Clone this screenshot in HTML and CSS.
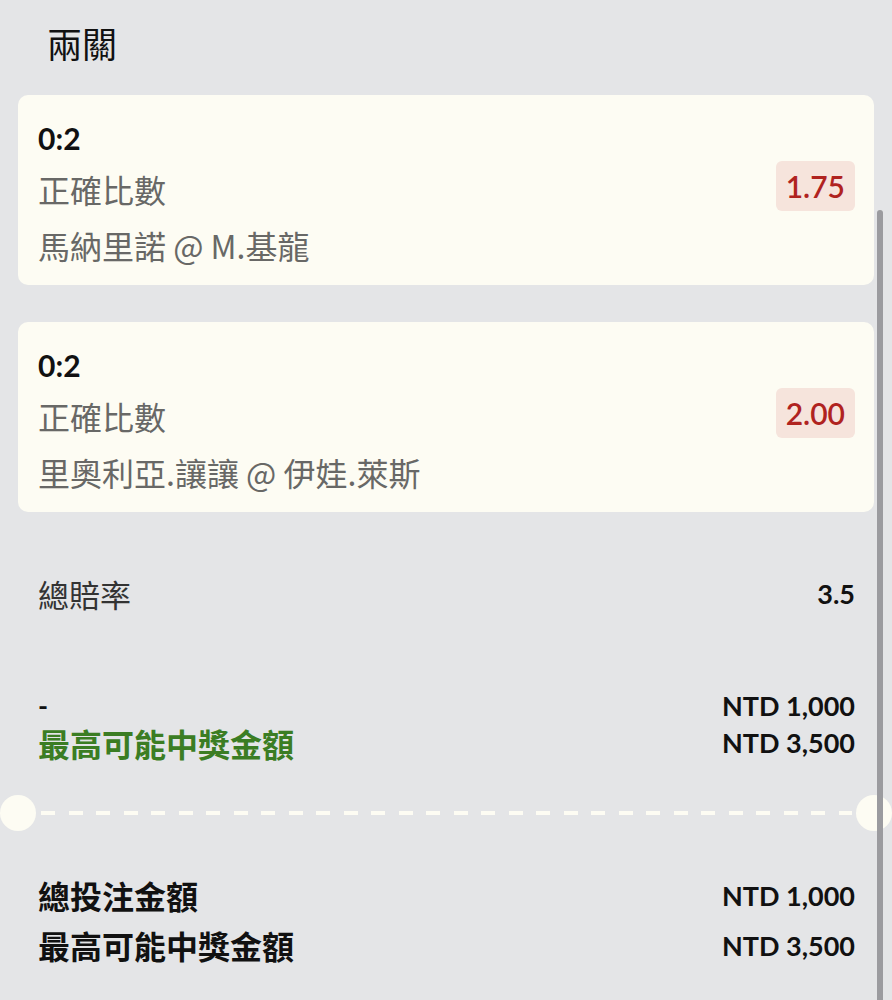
FILE: index.html
```html
<!DOCTYPE html>
<html lang="zh-Hant">
<head>
<meta charset="utf-8">
<link rel="stylesheet" href="styles.css">
</head>
<body>
<div class="page">
  <h1 class="title">兩關</h1>
  <div class="card">
    <div class="card-info">
      <div class="score">0:2</div>
      <div class="market">正確比數</div>
      <div class="match">馬納里諾 @ M.基龍</div>
    </div>
    <div class="odds">1.75</div>
  </div>
  <div class="card">
    <div class="card-info">
      <div class="score">0:2</div>
      <div class="market">正確比數</div>
      <div class="match">里奧利亞.讓讓 @ 伊娃.萊斯</div>
    </div>
    <div class="odds">2.00</div>
  </div>
  <div class="row total-odds">
    <span class="label">總賠率</span>
    <span class="num">3.5</span>
  </div>
  <div class="stake">
    <div class="stake-left">
      <span class="dash">-</span>
      <span class="win-label">最高可能中獎金額</span>
    </div>
    <div class="stake-right">
      <span class="num">NTD 1,000</span>
      <span class="num">NTD 3,500</span>
    </div>
  </div>
  <div class="divider">
    <span class="hole"></span>
    <span class="dashes"></span>
    <span class="hole"></span>
  </div>
  <div class="summary">
    <div class="row bold-row">
      <span class="label strong">總投注金額</span>
      <span class="num">NTD 1,000</span>
    </div>
    <div class="row bold-row">
      <span class="label strong">最高可能中獎金額</span>
      <span class="num">NTD 3,500</span>
    </div>
  </div>
</div>
<div class="scrollbar"></div>
</body>
</html>
```

FILE: styles.css
```css
html, body {
  margin: 0;
  padding: 0;
  background: #e4e5e7;
  height: 1000px;
  overflow: hidden;
}
body {
  font-family: "Noto Sans CJK TC", "Noto Sans", sans-serif;
  position: relative;
}
.page {
  padding: 0 18px;
}
.title {
  margin: 0;
  padding: 20px 0 0 29px;
  height: 95px;
  box-sizing: border-box;
  font-size: 35px;
  font-weight: 400;
  line-height: 46px;
  color: #111;
}
.card {
  background: #fdfcf3;
  border-radius: 10px;
  height: 190px;
  box-sizing: border-box;
  padding: 20px 19px 0 20px;
  display: flex;
  align-items: flex-start;
  justify-content: space-between;
  margin-bottom: 37px;
}
.card-info {
  display: flex;
  flex-direction: column;
}
.score {
  font-family: "Lato", "Noto Sans CJK TC", sans-serif;
  font-weight: 700;
  font-size: 30px;
  line-height: 46px;
  color: #111;
}
.market, .match {
  font-size: 32px;
  line-height: 56px;
  color: #686866;
}
.odds {
  font-family: "Lato", sans-serif;
  font-weight: 600;
  font-size: 30px;
  color: #b0231f;
  background: #f6e4dc;
  border-radius: 6px;
  padding: 0 10px;
  height: 50px;
  line-height: 50px;
  margin-top: 46px;
}
.row {
  display: flex;
  justify-content: space-between;
  align-items: center;
  padding: 0 19px 0 20px;
}
.total-odds {
  margin-top: 56px;
  height: 50px;
}
.label {
  font-size: 31px;
  color: #333;
}
.num {
  font-family: "Lato", sans-serif;
  font-weight: 700;
  font-size: 27px;
  color: #111;
}
.stake {
  display: flex;
  justify-content: space-between;
  padding: 0 19px 0 20px;
  margin-top: 69px;
}
.stake-left, .stake-right {
  display: flex;
  flex-direction: column;
}
.stake-right {
  align-items: flex-end;
}
.stake-right .num {
  line-height: 37px;
}
.dash {
  font-family: "Lato", sans-serif;
  font-weight: 700;
  font-size: 27px;
  line-height: 38px;
  color: #111;
}
.win-label {
  font-size: 32px;
  line-height: 36px;
  font-weight: 700;
  color: #3b7d23;
}
.divider {
  display: flex;
  align-items: center;
  margin: 34px -18px 0;
  height: 36px;
}
.hole {
  width: 36px;
  height: 36px;
  border-radius: 50%;
  background: #fdfcf3;
  flex: none;
}
.dashes {
  flex: 1;
  height: 4px;
  margin: 0 4px 0 5px;
  background: repeating-linear-gradient(to right, #fdfcf3 0 14px, transparent 14px 27.5px);
}
.summary {
  margin-top: 39px;
  display: flex;
  flex-direction: column;
}
.bold-row {
  height: 50px;
}
.label.strong {
  font-size: 32px;
  font-weight: 700;
  color: #111;
}
.scrollbar {
  position: absolute;
  left: 877px;
  top: 210px;
  width: 6px;
  height: 800px;
  border-radius: 3px;
  background: #9b9b9f;
}
```
